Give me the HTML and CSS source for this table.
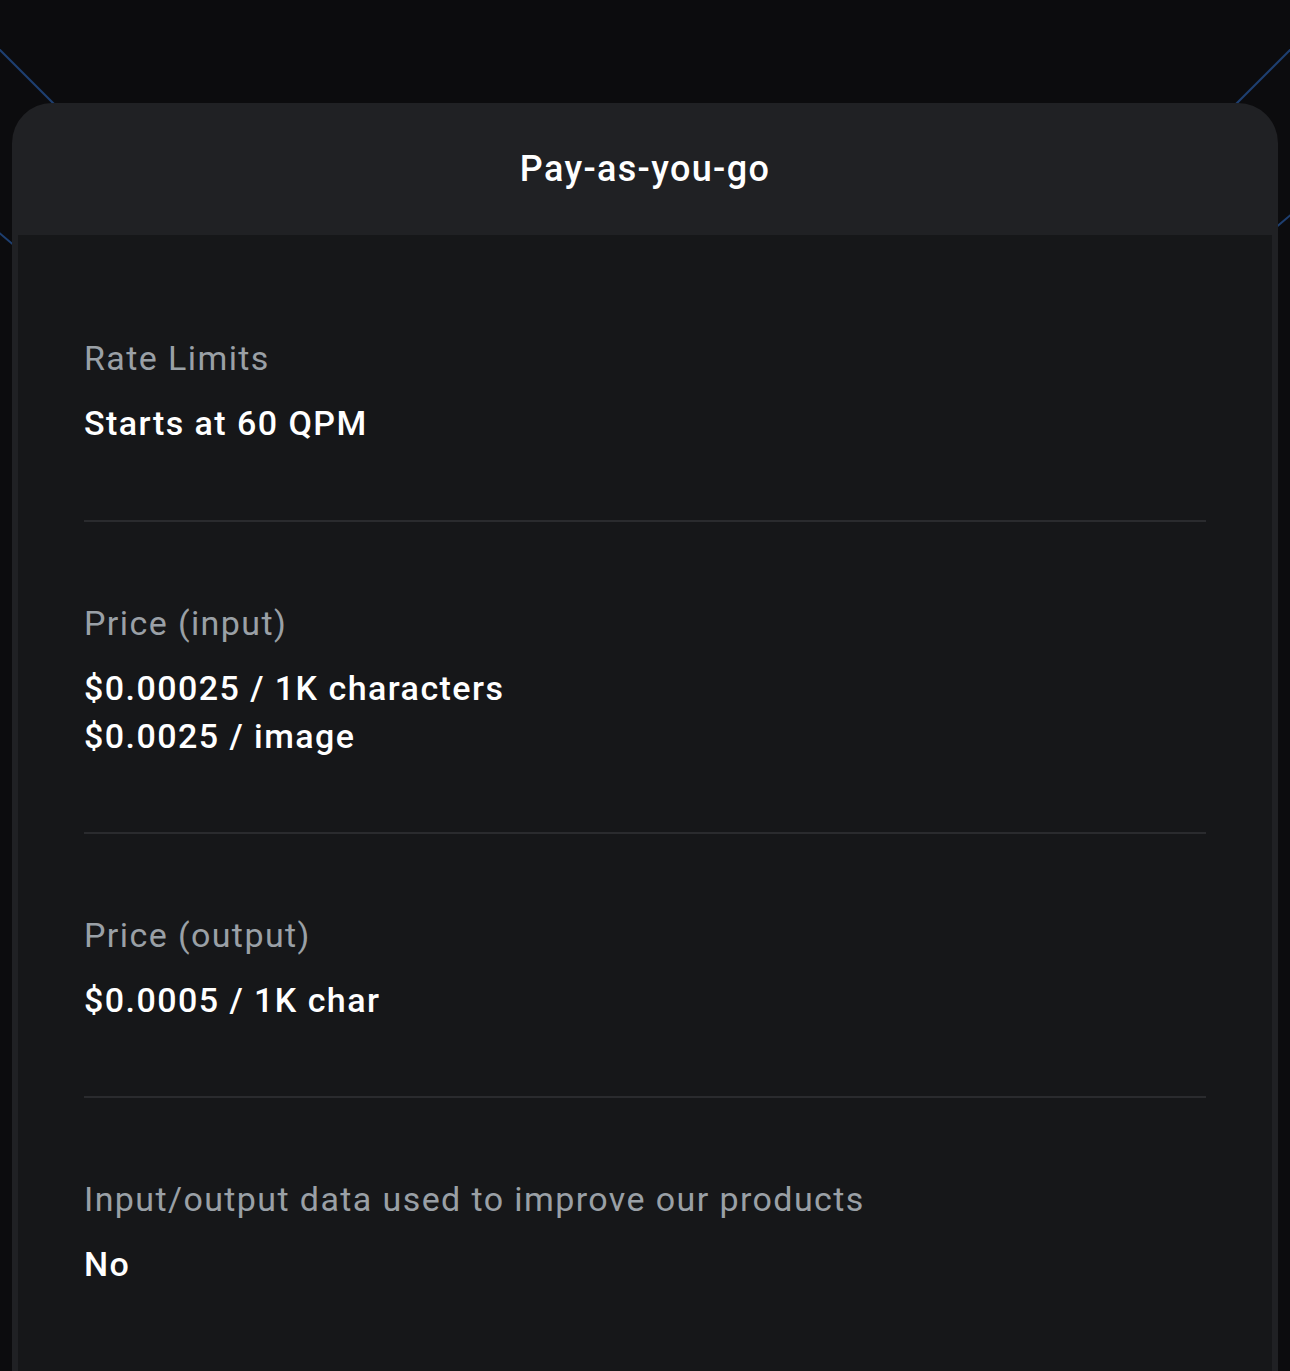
FILE: index.html
```html
<!DOCTYPE html>
<html lang="en">
<head>
    <meta charset="UTF-8">
    <meta name="viewport" content="width=device-width, initial-scale=1.0">
    <title>Pay-as-you-go</title>
    <link rel="stylesheet" href="styles.css">
</head>
<body>
    <!-- decorative lines behind the card -->
    <svg class="backdrop" width="1290" height="1371" viewBox="0 0 1290 1371">
        <line x1="-10" y1="40" x2="300" y2="350" />
        <line x1="-10" y1="225" x2="120" y2="335" />
        <line x1="1300" y1="40" x2="990" y2="350" />
        <line x1="1300" y1="207" x2="1170" y2="317" />
    </svg>

    <div class="card">
        <div class="card-header">Pay-as-you-go</div>
        <div class="card-body">
            <div class="row">
                <div class="label">Rate Limits</div>
                <div class="value">Starts at 60 QPM</div>
            </div>
            <div class="row">
                <div class="label">Price (input)</div>
                <div class="value">$0.00025 / 1K characters<br>$0.0025 / image</div>
            </div>
            <div class="row">
                <div class="label">Price (output)</div>
                <div class="value">$0.0005 / 1K char</div>
            </div>
            <div class="row last">
                <div class="label">Input/output data used to improve our products</div>
                <div class="value">No</div>
            </div>
        </div>
    </div>
</body>
</html>
```

FILE: styles.css
```css
/* page */
body {
    margin: 0;
    padding: 0;
    background-color: #0c0c0e;
    font-family: Roboto, "Liberation Sans", sans-serif;
    color: #fff;
    overflow: hidden;
}

.backdrop {
    position: absolute;
    top: 0;
    left: 0;
}

.backdrop line {
    stroke: #1e3f70;
    stroke-width: 2;
}

/* card */
.card {
    position: relative;
    margin: 103px 12px 0;
    background-color: #202124;
    border-radius: 40px 40px 0 0;
    min-height: 1268px;
    display: flex;
    flex-direction: column;
}

.card-header {
    height: 132px;
    display: flex;
    align-items: center;
    justify-content: center;
    font-size: 36px;
    font-weight: 500;
    letter-spacing: 1.35px;
}

.card-body {
    flex: 1;
    margin: 0 6px;
    padding: 22px 66px 0;
    background-color: #161719;
}

.row {
    padding: 77px 0 72px;
    border-bottom: 2px solid #2a2b2e;
}

.row:first-child {
    padding-bottom: 73px;
}

.row.last {
    border-bottom: none;
}

.label {
    font-size: 34px;
    line-height: 48px;
    letter-spacing: 1.4px;
    color: #9aa0a6;
}

.value {
    margin-top: 17px;
    font-size: 34px;
    line-height: 48px;
    letter-spacing: 1.45px;
    font-weight: 500;
    color: #fff;
}
```
